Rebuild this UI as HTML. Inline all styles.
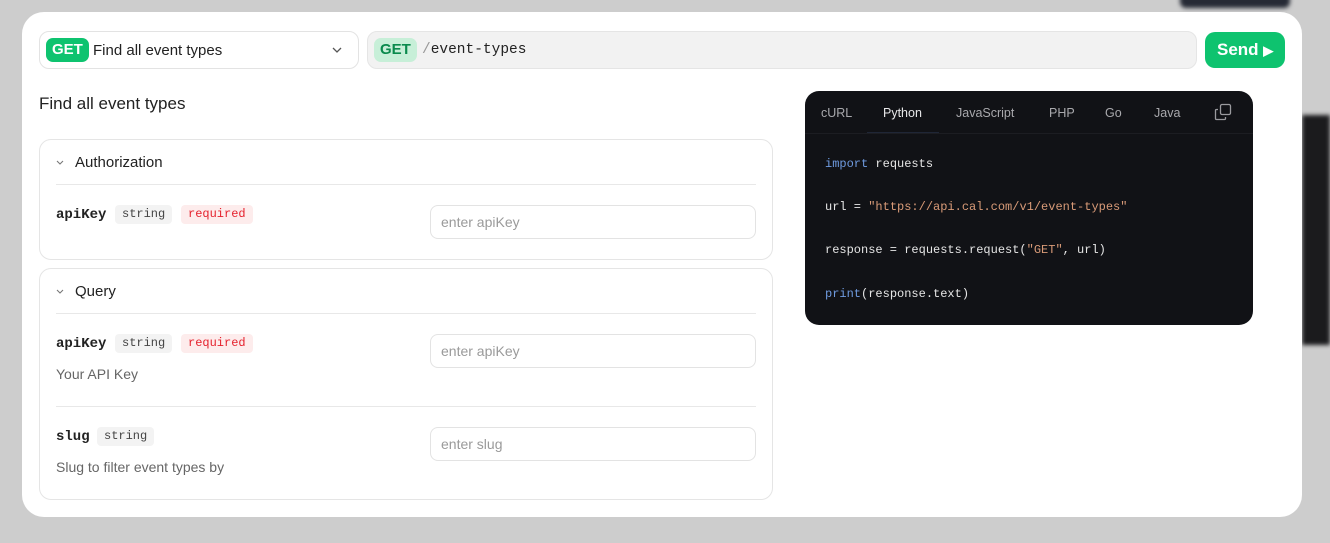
<!DOCTYPE html>
<html><head><style>
*{box-sizing:border-box;margin:0;padding:0}
body{width:1330px;height:543px;overflow:hidden;background:#cdcdcd;font-family:"Liberation Sans",sans-serif;position:relative}
.mono{font-family:"Liberation Mono",monospace}
.modal{position:absolute;left:22px;top:12px;width:1280px;height:505px;background:#fff;border-radius:22px}
.abs{position:absolute}
.get{background:#0ec36f;color:#fff;font-weight:bold;font-size:15px;border-radius:7px;height:24px;line-height:24px;padding:0 6px}
.card{position:absolute;left:17px;width:734px;border:1px solid #e5e5e5;border-radius:12px}
.hr{position:absolute;left:16px;right:16px;height:1px;background:#e8e8e8}
.tag{position:absolute;font-size:12px;height:19px;line-height:19px;padding:0 7px;border-radius:4px}
.str{background:#f3f3f3;color:#444}
.req{background:#fdecec;color:#e5212d}
.inp{position:absolute;left:390px;width:326px;height:34px;border:1px solid #e3e3e3;border-radius:8px;color:#9a9a9a;font-size:14px;line-height:32px;padding-left:10px}
.name{position:absolute;left:16px;font-size:14px;font-weight:bold;color:#222}
.desc{position:absolute;left:16px;font-size:14px;color:#666}
.code{position:absolute;left:783px;top:79px;width:448px;height:234px;background:#111216;border-radius:14px}
.tab{position:absolute;top:15px;font-size:12.5px;color:#a9a9ad}
.ln{position:absolute;left:20px;font-size:12px;color:#e6e6e6}
.kw{color:#6f9be0}.s{color:#d99b78}
</style></head><body>
<div class="abs" style="left:1302px;top:115px;width:28px;height:230px;background:#1b1b1d;filter:blur(2px)"></div>
<div class="abs" style="left:1180px;top:-10px;width:110px;height:18px;background:#262a35;border-radius:6px;filter:blur(2px)"></div>
<div class="modal">
 <div class="abs" style="left:17px;top:19px;width:320px;height:38px;border:1px solid #e3e3e3;border-radius:10px"></div>
 <div class="abs get" style="left:24px;top:26px">GET</div>
 <div class="abs" style="left:71px;top:30px;font-size:15px;color:#222">Find all event types</div>
 <svg class="abs" style="left:309px;top:32px" width="12" height="12" viewBox="0 0 12 12"><path d="M2 4l4 4 4-4" fill="none" stroke="#555" stroke-width="1.3"/></svg>
 <div class="abs" style="left:345px;top:19px;width:830px;height:38px;background:#f2f2f2;border:1px solid #e5e5e5;border-radius:10px"></div>
 <div class="abs get" style="left:352px;top:26px;background:#c7efd8;color:#0a8a4d">GET</div>
 <div class="abs mono" style="left:400px;top:30px;font-size:14.5px;color:#222"><span style="color:#999">/</span>event-types</div>
 <div class="abs" style="left:1183px;top:20px;width:80px;height:36px;background:#0ec36f;border-radius:10px;color:#fff;font-size:17px;font-weight:bold;line-height:36px;padding-left:12px">Send <span style="font-size:13px">&#9654;</span></div>
 <div class="abs" style="left:17px;top:82px;font-size:17px;color:#222">Find all event types</div>

 <div class="card" style="top:127px;height:121px">
  <svg class="abs" style="left:15px;top:17px" width="10" height="10" viewBox="0 0 10 10"><path d="M2 4l3 3 3-3" fill="none" stroke="#777" stroke-width="1.1"/></svg>
  <div class="abs" style="left:35px;top:14px;font-size:15px;color:#222">Authorization</div>
  <div class="hr" style="top:44px"></div>
  <div class="name mono" style="top:67px">apiKey</div>
  <div class="tag str mono" style="left:75px;top:65px">string</div>
  <div class="tag req mono" style="left:141px;top:65px">required</div>
  <div class="inp" style="top:65px">enter apiKey</div>
 </div>

 <div class="card" style="top:256px;height:232px">
  <svg class="abs" style="left:15px;top:17px" width="10" height="10" viewBox="0 0 10 10"><path d="M2 4l3 3 3-3" fill="none" stroke="#777" stroke-width="1.1"/></svg>
  <div class="abs" style="left:35px;top:14px;font-size:15px;color:#222">Query</div>
  <div class="hr" style="top:44px"></div>
  <div class="name mono" style="top:67px">apiKey</div>
  <div class="tag str mono" style="left:75px;top:65px">string</div>
  <div class="tag req mono" style="left:141px;top:65px">required</div>
  <div class="desc" style="top:97px">Your API Key</div>
  <div class="inp" style="top:65px">enter apiKey</div>
  <div class="hr" style="top:137px"></div>
  <div class="name mono" style="top:160px">slug</div>
  <div class="tag str mono" style="left:57px;top:158px">string</div>
  <div class="desc" style="top:190px">Slug to filter event types by</div>
  <div class="inp" style="top:158px">enter slug</div>
 </div>

 <div class="code">
  <div class="tab" style="left:16px">cURL</div>
  <div class="tab" style="left:78px;color:#e8e8ea">Python</div>
  <div class="abs" style="left:62px;top:41px;width:72px;height:1px;background:#1f2636"></div>
  <div class="tab" style="left:151px">JavaScript</div>
  <div class="tab" style="left:244px">PHP</div>
  <div class="tab" style="left:300px">Go</div>
  <div class="tab" style="left:349px">Java</div>
  <svg class="abs" style="left:409px;top:12px" width="18" height="18" viewBox="0 0 18 18" fill="none" stroke="#9a9a9e" stroke-width="1.3"><rect x="6.5" y="1.5" width="10" height="10" rx="1.5"/><path d="M4 6.5H2.5a1 1 0 0 0-1 1v8a1 1 0 0 0 1 1h8a1 1 0 0 0 1-1V14"/></svg>
  <div class="abs" style="left:0;right:0;top:42px;height:1px;background:#1c1d22"></div>
  <div class="ln mono" style="top:66px"><span class="kw">import</span> requests</div>
  <div class="ln mono" style="top:109px">url = <span class="s">"https://api.cal.com/v1/event-types"</span></div>
  <div class="ln mono" style="top:152px">response = requests.request(<span class="s">"GET"</span>, url)</div>
  <div class="ln mono" style="top:196px"><span class="kw">print</span>(response.text)</div>
 </div>
</div>
</body></html>
